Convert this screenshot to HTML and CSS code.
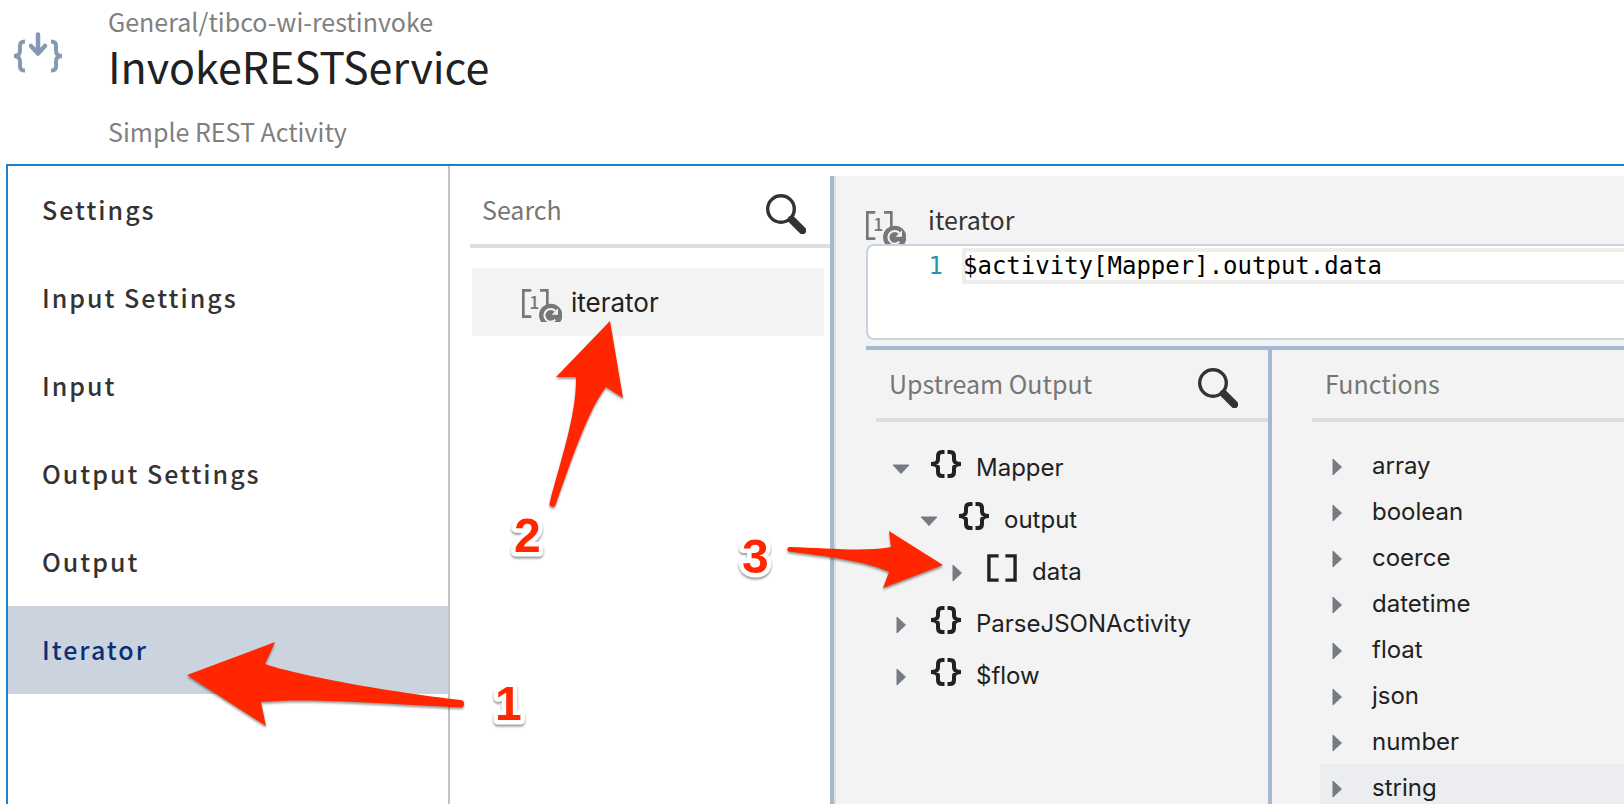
FILE: index.html
```html
<!DOCTYPE html>
<html lang="en">
<head>
<meta charset="utf-8">
<title>InvokeRESTService</title>
<link rel="stylesheet" href="styles.css">
</head>
<body>
<svg width="0" height="0" class="defs" aria-hidden="true">
  <symbol id="braces" viewBox="0 0 30 28">
    <path d="M13.500 2H11q-4 0-4 4v3.500Q7 14 0 14q7 0 7 4.500V22q0 4 4 4h2.500M16.500 2H19q4 0 4 4v3.500q0 4.500 7 4.500-7 0-7 4.500V22q0 4-4 4h-2.500" fill="none" stroke="currentColor" stroke-width="4"/>
  </symbol>
  <symbol id="brackets" viewBox="0 0 31 28">
    <path d="M12 1.500H2v25h10M19 1.500h10v25H19" fill="none" stroke="currentColor" stroke-width="3.500"/>
  </symbol>
  <symbol id="search" viewBox="0 0 40 40">
    <circle cx="15" cy="15" r="13.300" fill="none" stroke="currentColor" stroke-width="3.400"/>
    <path d="M25.500 25.500L36.500 36.500" stroke="currentColor" stroke-width="7.500" stroke-linecap="round"/>
  </symbol>
  <symbol id="right" viewBox="0 0 10 18"><path d="M1 1l8.500 8L1 17z" fill="#757b82" stroke="#757b82" stroke-linejoin="round"/></symbol>
  <symbol id="down" viewBox="0 0 18 10"><path d="M1 1h16L9 9.500z" fill="#757b82" stroke="#757b82" stroke-linejoin="round"/></symbol>
</svg>

<header class="header">
  <svg class="activity-icon" viewBox="0 0 48 41" fill="none" stroke="#8799b0" aria-hidden="true">
    <path d="M11 9.500q-5 0-5 4v5q0 5.500-6 5.500 6 0 6 5.500v5q0 4 5 4M37 9.500q5 0 5 4v5q0 5.500 6 5.500-6 0-6 5.500v5q0 4-5 4" stroke-width="4"/>
    <path d="M24 2.500v19M17 14l7 7.500 7-7.500" stroke-width="4.500" stroke-linecap="round" stroke-linejoin="round"/>
  </svg>
  <div class="heading">
    <p class="path">General/tibco-wi-restinvoke</p>
    <h1 class="title">InvokeRESTService</h1>
    <p class="description">Simple REST Activity</p>
  </div>
</header>

<main class="panel">
  <nav class="tabs">
    <button class="tab">Settings</button>
    <button class="tab">Input Settings</button>
    <button class="tab">Input</button>
    <button class="tab">Output Settings</button>
    <button class="tab">Output</button>
    <button class="tab tab-active">Iterator</button>
  </nav>

  <section class="fields">
    <div class="search">
      <input class="search-input" type="text" placeholder="Search" aria-label="Search fields">
      <button class="search-button" aria-label="Search"><svg class="search-icon"><use href="#search"/></svg></button>
    </div>
    <button class="field">
      <svg class="iterate-icon" viewBox="0 0 120 99" aria-hidden="true">
        <path d="M28 4H4v79h24M54 4h22v60" fill="none" stroke="#777" stroke-width="8"/>
        <text x="22" y="61" class="iterate-digit">1</text>
        <circle cx="86" cy="79" r="35" fill="#777"/>
        <path d="M100 92a19 19 0 1 1 0-26" fill="none" stroke="#f3f3f3" stroke-width="6"/>
        <path d="M108 58v19H89z" fill="#f3f3f3"/>
      </svg>
      iterator
    </button>
  </section>

  <section class="mapper">
    <div class="mapper-head">
      <svg class="iterate-icon" viewBox="0 0 120 99" aria-hidden="true">
        <path d="M28 4H4v79h24M54 4h22v60" fill="none" stroke="#777" stroke-width="8"/>
        <text x="22" y="61" class="iterate-digit">1</text>
        <circle cx="86" cy="79" r="35" fill="#777"/>
        <path d="M100 92a19 19 0 1 1 0-26" fill="none" stroke="#f3f3f3" stroke-width="6"/>
        <path d="M108 58v19H89z" fill="#f3f3f3"/>
      </svg>
      <h2 class="mapper-title">iterator</h2>
    </div>
    <div class="editor">
      <span class="line-number">1</span>
      <input class="code" type="text" value="$activity[Mapper].output.data" aria-label="iterator expression" spellcheck="false">
    </div>
    <div class="sources">
      <section class="upstream">
        <div class="search">
          <input class="search-input" type="text" placeholder="Upstream Output" aria-label="Upstream Output">
          <button class="search-button" aria-label="Search upstream output"><svg class="search-icon"><use href="#search"/></svg></button>
        </div>
        <ul class="tree">
          <li>
            <button class="node"><span class="caret"><svg class="down"><use href="#down"/></svg></span><svg class="type"><use href="#braces"/></svg>Mapper</button>
            <ul class="branch">
              <li>
                <button class="node"><span class="caret"><svg class="down"><use href="#down"/></svg></span><svg class="type"><use href="#braces"/></svg>output</button>
                <ul class="branch">
                  <li><button class="node"><span class="caret"><svg class="right"><use href="#right"/></svg></span><svg class="type"><use href="#brackets"/></svg>data</button></li>
                </ul>
              </li>
            </ul>
          </li>
          <li><button class="node"><span class="caret"><svg class="right"><use href="#right"/></svg></span><svg class="type"><use href="#braces"/></svg>ParseJSONActivity</button></li>
          <li><button class="node"><span class="caret"><svg class="right"><use href="#right"/></svg></span><svg class="type"><use href="#braces"/></svg>$flow</button></li>
        </ul>
      </section>
      <section class="functions">
        <div class="search">
          <input class="search-input" type="text" placeholder="Functions" aria-label="Functions">
        </div>
        <ul class="function-list">
          <li><button class="function"><svg class="right"><use href="#right"/></svg>array</button></li>
          <li><button class="function"><svg class="right"><use href="#right"/></svg>boolean</button></li>
          <li><button class="function"><svg class="right"><use href="#right"/></svg>coerce</button></li>
          <li><button class="function"><svg class="right"><use href="#right"/></svg>datetime</button></li>
          <li><button class="function"><svg class="right"><use href="#right"/></svg>float</button></li>
          <li><button class="function"><svg class="right"><use href="#right"/></svg>json</button></li>
          <li><button class="function"><svg class="right"><use href="#right"/></svg>number</button></li>
          <li><button class="function function-hover"><svg class="right"><use href="#right"/></svg>string</button></li>
        </ul>
      </section>
    </div>
  </section>
</main>

<svg class="callouts" width="960" height="760" viewBox="0 0 960 760">
  <g class="arrows">
    <path d="M187 675L275 642 265 664C300 676 390 692 461 700A3.700 3.700 0 0 1 461 707.300C400 705 310 697 261 702L266 726z"/>
    <path d="M610 321L623 398 606 387C587 411 567 473 555.500 505A3 3 0 0 1 549.800 502.500C559 465 577 415 576 377L556 377z"/>
    <path d="M943 565L883 588 889 572C863 560 822 556 788.500 551.500A2.500 2.500 0 0 1 789 547C830 548 862 552 891 547L889 531z"/>
  </g>
  <g class="numbers">
    <text x="495" y="720">1</text>
    <text x="514" y="552">2</text>
    <text x="742" y="573">3</text>
  </g>
</svg>
</body>
</html>
```

FILE: styles.css
```css
:root {
  --sans: "Noto Sans CJK SC", "Noto Sans", sans-serif;
  --ui: Inter, "Liberation Sans", sans-serif;
  --rule: #dedede;
  --blue-rule: #a4b8d2;
  --surface: #f3f3f3;
}

* { box-sizing: border-box; }

body {
  margin: 0;
  min-height: 100vh;
  display: flex;
  flex-direction: column;
  position: relative;
  overflow: hidden;
  background: #fff;
  color: #212121;
  font-family: var(--sans);
  font-size: 25px;
}

h1, h2, p, ul { margin: 0; padding: 0; font-weight: 400; }
ul { list-style: none; }

button, input {
  margin: 0;
  padding: 0;
  border: 0;
  background: none;
  color: inherit;
  font: inherit;
  text-align: left;
}

svg { display: block; flex: none; }
.defs { position: absolute; }

.header {
  display: flex;
  gap: 46px;
  padding: 3px 14px 15px;
}
.activity-icon { width: 48px; height: 41px; margin-top: 29px; }
.path, .description { color: #808080; line-height: 36px; }
.title { font-size: 43px; line-height: 52px; }
.description { margin-top: 22px; }

.panel {
  flex: 1;
  display: grid;
  grid-template-columns: 442px 380px 1fr;
  margin-left: 6px;
  border: solid #1883cc;
  border-width: 2px 0 0 2px;
}

.tabs { border-right: 2px solid #c1c1c1; }
.tab {
  display: block;
  width: 100%;
  height: 88px;
  padding: 0 0 2px 34px;
  color: #333;
  font-weight: 500;
  letter-spacing: 2px;
}
.tab-active { background: #cbd3df; color: #072f7a; }

.search {
  display: flex;
  align-items: center;
  height: 72px;
  border-bottom: 4px solid var(--rule);
}
.search-input { flex: 1; min-width: 0; height: 36px; margin-bottom: 2px; outline: 0; }
.search-input::placeholder { color: #767676; opacity: 1; }
.search-button { margin: 8px 24px 0 0; }
.search-icon { width: 40px; height: 40px; color: #333; }

.fields { padding: 10px 0 0 20px; }
.fields .search { padding-left: 12px; }
.field {
  display: flex;
  align-items: center;
  gap: 9px;
  width: calc(100% - 8px);
  height: 68px;
  margin: 20px 0 0 2px;
  padding-left: 50px;
  background: var(--surface);
  font-family: var(--ui);
  font-size: 26px;
}
.iterate-icon { width: 40px; height: 33px; }
.field .iterate-icon { margin-top: 7px; }
.iterate-digit { font: 500 53px var(--sans); fill: #777; }

.mapper {
  display: flex;
  flex-direction: column;
  min-width: 0;
  margin-top: 10px;
  padding-left: 32px;
  background: var(--surface);
  border-left: 4px solid var(--blue-rule);
  box-shadow: inset 2px 0 var(--rule);
}
.mapper-head {
  display: flex;
  align-items: flex-end;
  gap: 22px;
  height: 68px;
}
.mapper-title { padding-bottom: 7px; color: #333; font-size: 25px; line-height: 36px; }

.editor {
  display: flex;
  height: 96px;
  border: solid #c8d3e1;
  border-width: 2px 0 2px 2px;
  border-radius: 8px 0 0 8px;
  background: #fffffe;
  padding-top: 2px;
  font-family: "DejaVu Sans Mono", monospace;
  font-size: 24px;
  line-height: 36px;
}
.line-number { width: 94px; padding-right: 19px; color: #2b91af; text-align: right; }
.code {
  flex: 1;
  min-width: 0;
  height: 36px;
  padding-left: 1px;
  box-shadow: inset 4px 0 #eee, inset 0 4px #eee, inset 0 -4px #eee;
  color: #000;
  outline: 0;
}

.sources {
  flex: 1;
  display: grid;
  grid-template-columns: 406px 1fr;
  margin-top: 6px;
  border-top: 4px solid var(--blue-rule);
}
.upstream { padding-left: 10px; border-right: 4px solid var(--blue-rule); }
.upstream .search, .functions .search { padding-left: 13px; }
.upstream .search-button { margin-right: 30px; }
.functions { padding-left: 40px; }

.tree { padding: 19px 0 0 14px; font-family: var(--ui); font-size: 24px; }
.branch { padding-left: 28px; }
.node { display: flex; align-items: center; height: 52px; }
.caret { display: grid; place-items: center; width: 22px; margin: 3px 19px 0 0; }
.type { width: 30px; height: 28px; margin: 0 15px 6px 0; }
.right { width: 10px; height: 18px; }
.down { width: 18px; height: 10px; }

.function-list { padding: 20px 0 0 8px; font-family: var(--ui); font-size: 24px; }
.function {
  display: flex;
  align-items: center;
  gap: 30px;
  width: 100%;
  height: 46px;
  padding-left: 12px;
}
.function .right { margin-top: 4px; }
.function-hover { background: #ebedf0; }

.callouts { position: absolute; top: 0; left: 0; pointer-events: none; }
.arrows { fill: #ff2600; filter: drop-shadow(0 2px 1px rgba(0, 0, 0, .4)); }
.numbers {
  font: bold 48px "Liberation Sans", Arial, sans-serif;
  fill: #ff2600;
  stroke: #fff;
  stroke-width: 9px;
  stroke-linejoin: round;
  paint-order: stroke;
  filter: drop-shadow(0 2px 1px rgba(0, 0, 0, .4));
}
```
